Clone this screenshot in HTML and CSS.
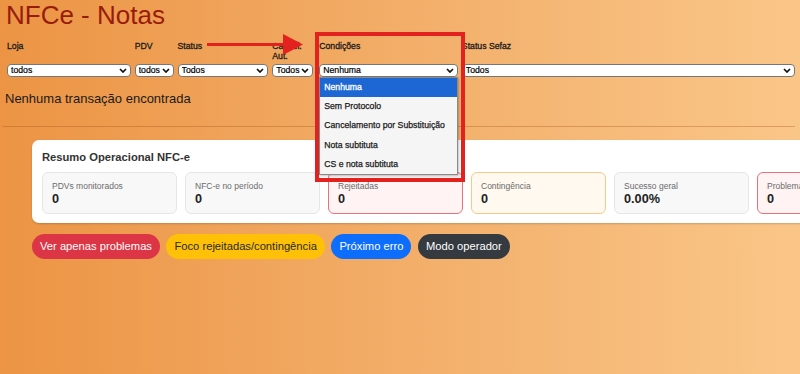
FILE: index.html
```html
<!DOCTYPE html>
<html lang="pt-BR">
<head>
  <meta charset="UTF-8" />
  <meta name="viewport" content="width=device-width, initial-scale=1.0"/>
  <title>NFCe - Notas</title>
  <link rel="stylesheet" href="styles.css">
</head>
<body>
  <h1 class="page-title">NFCe - Notas</h1>

  <form class="filters">
    <div class="field field-loja">
      <label>Loja</label>
      <div class="select-wrap">
        <select><option>todos</option></select>
        <svg class="chevron" viewBox="0 0 8 5" width="8" height="5"><path d="M1 1l3 3 3-3"/></svg>
      </div>
    </div>
    <div class="field field-pdv">
      <label>PDV</label>
      <div class="select-wrap">
        <select><option>todos</option></select>
        <svg class="chevron" viewBox="0 0 8 5" width="8" height="5"><path d="M1 1l3 3 3-3"/></svg>
      </div>
    </div>
    <div class="field field-status">
      <label>Status</label>
      <div class="select-wrap">
        <select><option>Todos</option></select>
        <svg class="chevron" viewBox="0 0 8 5" width="8" height="5"><path d="M1 1l3 3 3-3"/></svg>
      </div>
    </div>
    <div class="field field-aut">
      <label>Cancel. Aut.</label>
      <div class="select-wrap">
        <select><option>Todos</option></select>
        <svg class="chevron" viewBox="0 0 8 5" width="8" height="5"><path d="M1 1l3 3 3-3"/></svg>
      </div>
    </div>
    <div class="field field-cond">
      <label>Condições</label>
      <div class="select-wrap">
        <select><option>Nenhuma</option></select>
        <svg class="chevron" viewBox="0 0 8 5" width="8" height="5"><path d="M1 1l3 3 3-3"/></svg>
      </div>
      <ul class="dropdown">
        <li class="active">Nenhuma</li>
        <li>Sem Protocolo</li>
        <li>Cancelamento por Substituição</li>
        <li>Nota subtituta</li>
        <li>CS e nota subtituta</li>
      </ul>
    </div>
    <div class="field field-sefaz">
      <label>Status Sefaz</label>
      <div class="select-wrap">
        <select><option>Todos</option></select>
        <svg class="chevron" viewBox="0 0 8 5" width="8" height="5"><path d="M1 1l3 3 3-3"/></svg>
      </div>
    </div>
  </form>

  <p class="empty">Nenhuma transação encontrada</p>
  <hr class="divider">

  <section class="summary">
    <h2>Resumo Operacional NFC-e</h2>
    <div class="stats">
      <div class="stat"><span>PDVs monitorados</span><strong>0</strong></div>
      <div class="stat"><span>NFC-e no período</span><strong>0</strong></div>
      <div class="stat danger"><span>Rejeitadas</span><strong>0</strong></div>
      <div class="stat warning"><span>Contingência</span><strong>0</strong></div>
      <div class="stat"><span>Sucesso geral</span><strong>0.00%</strong></div>
      <div class="stat danger"><span>Problemas</span><strong>0</strong></div>
    </div>
  </section>

  <div class="actions">
    <button class="pill pill-red">Ver apenas problemas</button>
    <button class="pill pill-yellow">Foco rejeitadas/contingência</button>
    <button class="pill pill-blue">Próximo erro</button>
    <button class="pill pill-dark">Modo operador</button>
  </div>

  <!-- annotation drawn over the screenshot -->
  <div class="annot-box"></div>
  <svg class="annot-arrow" viewBox="0 0 100 30" width="100" height="30">
    <rect x="2" y="13" width="80" height="3"/>
    <polygon points="78,4 98,14.5 78,25"/>
  </svg>
</body>
</html>
```

FILE: styles.css
```css
html {
  overflow: hidden;
}

body {
  font-family: "Liberation Sans", Arial, sans-serif;
  margin: 0;
  padding: 0 5px;
  min-height: 100vh;
  background: linear-gradient(to right, #ec9444, #f3b06c 55%, #fac688);
  color: #111;
  position: relative;
}

.page-title {
  margin: 0 0 10px;
  font-size: 26px;
  font-weight: normal;
  line-height: normal;
  color: #981c0c;
  padding-left: 1px;
}

.filters {
  display: flex;
  gap: 4px;
  padding-left: 2px;
}

.field {
  display: flex;
  flex-direction: column;
  position: relative;
}

.field label {
  font-size: 8.7px;
  line-height: 10px;
  min-height: 20px;
  margin-bottom: 3px;
  color: #1a1a1a;
  -webkit-text-stroke: 0.3px #1a1a1a;
}

.field-loja { width: 124px; }
.field-pdv { width: 39px; }
.field-status { width: 91px; }
.field-aut { width: 41px; }
.field-cond { width: 139px; margin-left: 2px; }
.field-sefaz { width: 334px; }

.select-wrap {
  display: grid;
}

.select-wrap select,
.select-wrap .chevron {
  grid-area: 1 / 1;
}

.select-wrap select {
  appearance: none;
  -webkit-appearance: none;
  width: 100%;
  height: 13px;
  margin: 0;
  padding: 0 12px 0 3px;
  border: 1px solid #767676;
  border-radius: 4px;
  background: #fff;
  font-family: inherit;
  font-size: 8.7px;
  line-height: 11px;
  color: #000;
  -webkit-text-stroke: 0.2px #000;
}

.chevron {
  justify-self: end;
  align-self: center;
  margin-right: 4px;
  pointer-events: none;
}

.chevron path {
  fill: none;
  stroke: #111;
  stroke-width: 1.7;
}

.dropdown {
  position: absolute;
  top: 100%;
  left: 0;
  width: 100%;
  box-sizing: border-box;
  margin: 0;
  padding: 0;
  list-style: none;
  background: #f5f5f5;
  border: 1px solid #8a8a8a;
  box-shadow: 1px 1px 2px rgba(0, 0, 0, 0.25);
  z-index: 5;
}

.dropdown li {
  height: 19.2px;
  line-height: 19.2px;
  padding: 0 4px;
  font-size: 8.7px;
  color: #1a1a1a;
  -webkit-text-stroke: 0.25px #1a1a1a;
  white-space: nowrap;
}

.dropdown li.active {
  background: #1d67d4;
  color: #fff;
  -webkit-text-stroke: 0.3px #fff;
}

.empty {
  margin: 14px 0 0;
  font-size: 13px;
  color: #1a1a1a;
}

.divider {
  margin: 20px 0 13px -2px;
  border: 0;
  border-top: 1px solid rgba(150, 70, 10, 0.3);
}

.summary {
  width: 880px;
  margin-left: 27px;
  padding: 11px 10px 9px;
  background: #fff;
  border-radius: 7px;
  box-shadow: 0 1px 2px rgba(0, 0, 0, 0.18);
}

.summary h2 {
  margin: 0 0 8px;
  font-size: 11.2px;
  line-height: 13px;
  color: #333;
}

.stats {
  display: flex;
  gap: 8px;
}

.stat {
  width: 135px;
  flex: none;
  box-sizing: border-box;
  padding: 8px 9px 6px;
  border: 1px solid #e6e6e6;
  border-radius: 6px;
  background: #f8f8f8;
  display: flex;
  flex-direction: column;
}

.stat span {
  font-size: 8.5px;
  line-height: 11px;
  color: #6b6b6b;
  white-space: nowrap;
}

.stat strong {
  font-size: 12.7px;
  line-height: 15px;
  color: #222;
}

.stat.danger {
  border-color: #e8717c;
  background: #fff3f4;
}

.stat.warning {
  border-color: #f6c98a;
  background: #fff9ef;
}

.actions {
  display: flex;
  gap: 6.5px;
  margin: 11px 0 0 27px;
}

.pill {
  height: 24.5px;
  padding: 0 8px;
  border: none;
  border-radius: 13px;
  font-family: inherit;
  font-size: 11.2px;
  color: #fff;
  cursor: pointer;
}

.pill-red { background: #dc3545; }
.pill-yellow { background: #ffc107; color: #2a2a2a; }
.pill-blue { background: #0d6efd; }
.pill-dark { background: #343a40; }

.annot-box {
  position: absolute;
  left: 315px;
  top: 32px;
  width: 150px;
  height: 150px;
  box-sizing: border-box;
  border: 4px solid #e3211f;
  z-index: 10;
}

.annot-arrow {
  position: absolute;
  left: 205px;
  top: 30px;
  fill: #e3211f;
  z-index: 10;
}
```
